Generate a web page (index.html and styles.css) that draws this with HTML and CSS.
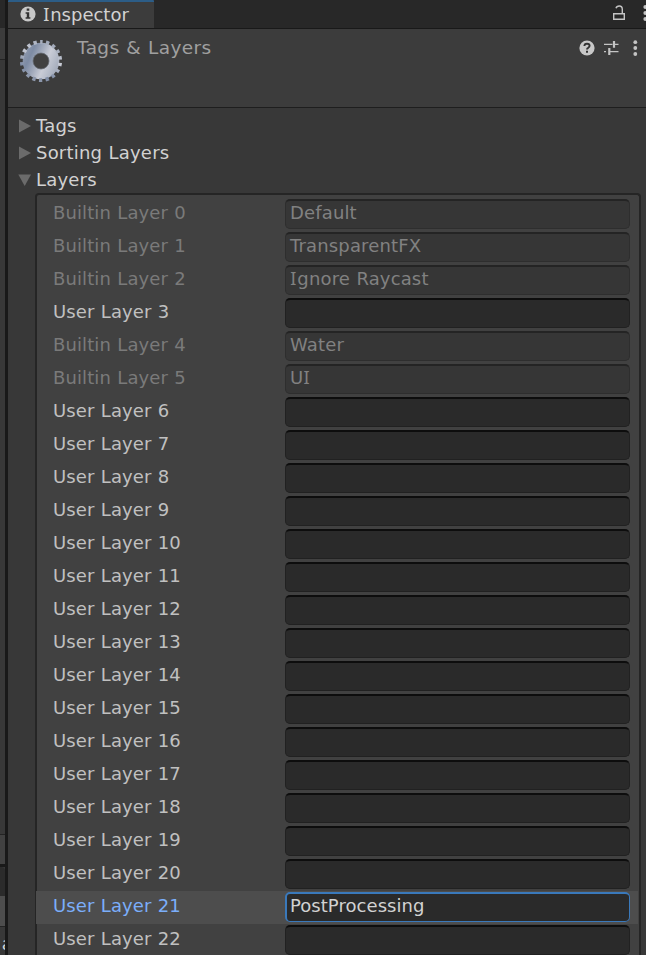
FILE: index.html
```
<!DOCTYPE html>
<html lang="en">
<head>
<meta charset="utf-8">
<title>Inspector</title>
<link rel="stylesheet" href="styles.css">
</head>
<body>
<div class="app">
  <aside class="dock">
    <div class="dock-tabs"></div><div class="dock-tool"></div><div class="dock-body"></div>
    <div class="dock-foot"></div><div class="dock-gap"></div><div class="dock-dark"></div><div class="dock-row"></div><div class="dock-last"><span>a</span></div>
  </aside>
  <main class="inspector">
    <header class="tabbar">
      <div class="tab">
        <svg class="info" viewBox="0 0 16 16"><circle cx="8" cy="8" r="7.6" fill="#c8c8c8"/><path d="M6.7 2.6h2.6v2.2H6.7zM5.6 6.3h3.6v5h1.2v1.5H5.6v-1.5h1.2V7.8H5.6z" fill="#333"/></svg>
        <div><span class="cap-i">I</span>nspector</div>
      </div>
      <svg class="bar-icons" viewBox="0 0 40 28"><path d="M7.7 13.7h10.6v5.6H7.7zM16.3 13V9.5Q16.3 6 13.3 6Q10.6 6 10 8.2" fill="none" stroke="#c4c4c4" stroke-width="1.4"/><g fill="#c4c4c4"><circle cx="39.3" cy="7" r="1.9"/><circle cx="39.3" cy="13" r="1.9"/><circle cx="39.3" cy="19" r="1.9"/></g></svg>
    </header>
    <section class="title">
      <svg class="gear" viewBox="0 0 44 44">
        <defs><linearGradient id="steel" gradientUnits="userSpaceOnUse" x1="4" y1="14" x2="40" y2="30"><stop offset="0" stop-color="#8f99ad"/><stop offset=".2" stop-color="#7d8ba4"/><stop offset=".42" stop-color="#a3abbc"/><stop offset=".62" stop-color="#c9ccd6"/><stop offset=".8" stop-color="#b6bcc9"/><stop offset="1" stop-color="#a0a8b8"/></linearGradient></defs>
        <circle cx="22" cy="22" r="13" fill="none" stroke="url(#steel)" stroke-width="10.6"/>
        <circle cx="22" cy="22" r="19.2" fill="none" stroke="url(#steel)" stroke-width="3.8" stroke-dasharray="3.3 3.402" stroke-dashoffset="1.65" transform="rotate(-90 22 22)"/>
        <circle cx="22" cy="22" r="8" fill="#414141" stroke="#6b7079" stroke-width=".8"/>
      </svg>
      <h1>Tags &amp; Layers</h1>
      <svg class="title-icons" viewBox="0 0 72 20"><circle cx="13" cy="10" r="7.6" fill="#c8c8c8"/><path d="M10.4 8.1Q10.4 5.7 13 5.7Q15.6 5.7 15.6 7.8Q15.6 9 14.2 9.8Q13 10.4 13 11.6" fill="none" stroke="#333" stroke-width="1.9"/><path d="M12 12.7h2v2h-2z" fill="#333"/><path d="M30 6.3h8.5M41 6.3h3.5M30 13.6h2M35 13.6h9.5" stroke="#c4c4c4" stroke-width="1.3"/><path d="M40 3v6.7M35.3 10v7" stroke="#c4c4c4" stroke-width="2.2"/><g fill="#c4c4c4"><circle cx="61.3" cy="4.2" r="1.9"/><circle cx="61.3" cy="10" r="1.9"/><circle cx="61.3" cy="16" r="1.9"/></g></svg>
    </section>
    <section class="content">
      <div class="fold"><svg viewBox="0 0 12 14"><path d="M0 0.5L12 7L0 13.5z"/></svg>Tags</div>
      <div class="fold"><svg viewBox="0 0 12 14"><path d="M0 0.5L12 7L0 13.5z"/></svg>Sorting Layers</div>
      <div class="fold"><svg viewBox="0 0 12 14"><path d="M-.7 1.5H12L5.7 13z"/></svg>Layers</div>
      <div class="layers">
        <div class="row builtin"><span>Builtin Layer 0</span><div class="field">Default</div></div>
        <div class="row builtin"><span>Builtin Layer 1</span><div class="field">TransparentFX</div></div>
        <div class="row builtin"><span>Builtin Layer 2</span><div class="field"><b class="cap-i">I</b>gnore Raycast</div></div>
        <div class="row"><span>User Layer 3</span><div class="field"></div></div>
        <div class="row builtin"><span>Builtin Layer 4</span><div class="field">Water</div></div>
        <div class="row builtin"><span>Builtin Layer 5</span><div class="field">U<b class="cap-i">I</b></div></div>
        <div class="row"><span>User Layer 6</span><div class="field"></div></div>
        <div class="row"><span>User Layer 7</span><div class="field"></div></div>
        <div class="row"><span>User Layer 8</span><div class="field"></div></div>
        <div class="row"><span>User Layer 9</span><div class="field"></div></div>
        <div class="row"><span>User Layer 10</span><div class="field"></div></div>
        <div class="row"><span>User Layer 11</span><div class="field"></div></div>
        <div class="row"><span>User Layer 12</span><div class="field"></div></div>
        <div class="row"><span>User Layer 13</span><div class="field"></div></div>
        <div class="row"><span>User Layer 14</span><div class="field"></div></div>
        <div class="row"><span>User Layer 15</span><div class="field"></div></div>
        <div class="row"><span>User Layer 16</span><div class="field"></div></div>
        <div class="row"><span>User Layer 17</span><div class="field"></div></div>
        <div class="row"><span>User Layer 18</span><div class="field"></div></div>
        <div class="row"><span>User Layer 19</span><div class="field"></div></div>
        <div class="row"><span>User Layer 20</span><div class="field"></div></div>
        <div class="row active"><span>User Layer 21</span><div class="field">PostProcessing</div></div>
        <div class="row"><span>User Layer 22</span><div class="field"></div></div>
      </div>
    </section>
  </main>
</div>
</body>
</html>
```
FILE: styles.css
```
* { box-sizing: border-box; }
body { margin: 0; background: #383838; color: #d2d2d2; font: 18px/27px "DejaVu Sans", sans-serif; letter-spacing: .15px; word-spacing: .5px; }
svg { display: block; flex: none; }
.app { display: flex; height: 955px; overflow: hidden; }
.dock { width: 8px; flex: none; display: flex; flex-direction: column; border-right: 3px solid #191919; background: #383838; overflow: hidden; }
.dock > div { flex: none; }
.dock-tabs { height: 28px; background: #282828; }
.dock-tool { height: 32px; background: #3c3c3c; border-bottom: 1px solid #232323; }
.dock-body { height: 775px; border-bottom: 1px solid #232323; }
.dock-foot { height: 29px; background: #414141; }
.dock-gap { height: 3px; background: #191919; }
.dock-dark { height: 29px; background: #2b2b2b; border-top-right-radius: 4px; }
.dock-row { height: 31px; background: #4d4d4d; border-bottom: 1px solid #232323; }
.dock-last { height: 28px; display: flex; justify-content: flex-end; align-items: center; overflow: hidden; }
.dock-last span { margin: 4px -8px 0 0; }
.cap-i { font-family: "Noto Sans", sans-serif; font-weight: 400; line-height: 1; margin: 0 .9px 0 .2px; }
.inspector { flex: 1; min-width: 0; display: flex; flex-direction: column; }
.tabbar { height: 29px; flex: none; display: flex; justify-content: space-between; background: #282828; border-bottom: 1px solid #191919; }
.tab { display: flex; width: 146px; height: 28px; padding-left: 12px; gap: 7px; background: #3c3c3c; border-top: 2px solid #2c5d87; line-height: 26px; letter-spacing: 0; border-radius: 1px 1px 0 0; }
.info { width: 16px; height: 16px; margin-top: 4px; }
.bar-icons { width: 40px; height: 28px; }
.title { height: 79px; flex: none; display: flex; background: #3c3c3c; border-bottom: 1px solid #1e1e1e; padding-left: 11px; }
.gear { width: 44px; height: 44px; margin-top: 10px; }
.title h1 { margin: 5px auto 0 14px; font-size: 18.5px; font-weight: 400; line-height: 28px; letter-spacing: .4px; color: #a0a0a0; }
.title-icons { width: 72px; height: 20px; margin-top: 9px; }
.content { flex: none; padding: 4px 5px 0 11px; }
.fold { display: flex; align-items: center; height: 27px; gap: 5px; line-height: 28px; letter-spacing: .2px; }
.fold svg { width: 12px; height: 14px; fill: #6b6b6b; overflow: visible; }
.layers { margin: 0 0 0 16px; border: 2px solid #252525; border-bottom: 0; border-radius: 4px 4px 0 0; background: #414141; padding-top: 3px; }
.row { display: flex; align-items: flex-start; height: 33px; padding: 1px 0 0 15px; color: #c0c0c0; }
.row > span { width: 233px; line-height: 28px; padding-left: 1px; letter-spacing: .1px; }
.field { width: 345px; height: 30px; padding: 0 4px; border: 1px solid #212121; border-top: 2px solid #0d0d0d; border-radius: 5px; background: #2a2a2a; line-height: 24px; letter-spacing: .15px; color: #d2d2d2; }
.builtin { color: #7a7a7a; }
.builtin .field { background: #363636; border-color: #242424 #2e2e2e #2e2e2e; color: #818181; }
.active { background: #4d4d4d; color: #7baefa; margin: 0 1px 0 -1px; padding-left: 16px; }
.active .field { border: 2px solid #3a79bb; border-width: 2px 1px 1px 2px; padding-left: 3px; letter-spacing: .05px; }
```
